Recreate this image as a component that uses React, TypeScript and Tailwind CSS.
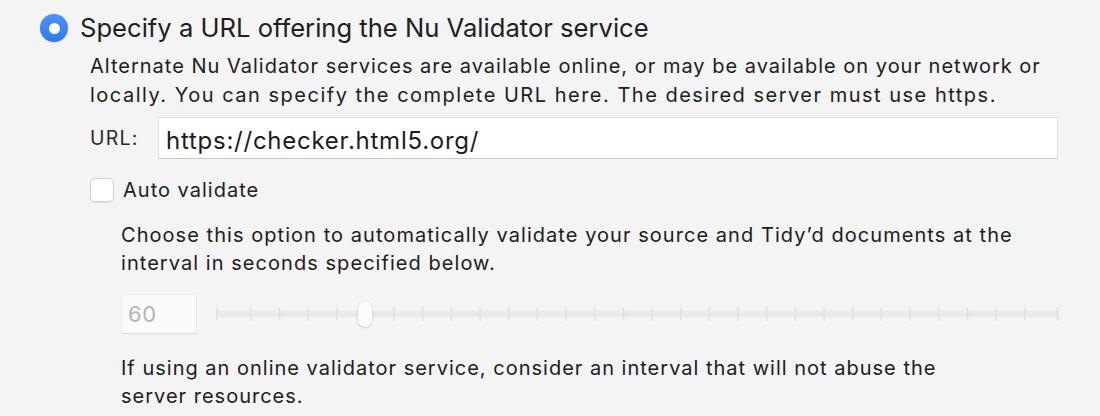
const font = { fontFamily: "Inter, 'Noto Sans', sans-serif" };

const TRACK_W = 842;
const TICKS = [0, ...Array.from({ length: 28 }, (_, i) => 34 + (i * 774) / 27), TRACK_W];

function RadioOn() {
  return (
    <span className="flex h-[28px] w-[28px] shrink-0 items-center justify-center rounded-full bg-gradient-to-b from-[#4c93fa] to-[#2f78f2] shadow-[0_0.5px_1px_rgba(0,0,0,0.25)]">
      <span className="h-[11px] w-[11px] rounded-full bg-white" />
    </span>
  );
}

function Slider() {
  return (
    <div className="relative h-[26px] w-[842px]">
      <svg width={TRACK_W + 2} height={26} className="absolute left-0 top-0">
        <rect x={0} y={10} width={TRACK_W} height={6} fill="#e9e9e9" />
        {TICKS.map((x, i) => (
          <rect key={i} x={Math.min(x, TRACK_W - 1)} y={6} width={1.5} height={14} fill="#e0e0e0" />
        ))}
      </svg>
      <div className="absolute left-[142px] top-0 h-[26px] w-[14px] rounded-full bg-[#fbfbfb] shadow-[0_0_0_0.5px_rgba(0,0,0,0.08),0_1px_2px_rgba(0,0,0,0.15)]" />
    </div>
  );
}

export default function App() {
  return (
    <div className="h-[416px] w-[1100px] overflow-hidden bg-[#f4f4f4] text-[#202020]" style={font}>
      <div className="flex items-center gap-3 pl-[40px] pt-[12px]">
        <RadioOn />
        <span className="whitespace-nowrap text-[25.6px] leading-[32px]">Specify a URL offering the Nu Validator service</span>
      </div>

      <div className="pl-[90px]">
        <p className="mt-[8px] whitespace-nowrap text-[20px] leading-[29px] tracking-[1px]">
          Alternate Nu Validator services are available online, or may be available on your network or
          <br />
          <span className="tracking-[1.5px]">locally. You can specify the complete URL here. The desired server must use https.</span>
        </p>

        <div className="mt-[7px] flex items-center">
          <span className="w-[68px] text-[19.5px] leading-[24px] tracking-[1.2px] text-[#2a2a2a]">URL:</span>
          <div className="h-[42px] w-[900px] whitespace-nowrap border border-[#dedede] border-b-[#c8c8c8] bg-white pl-[7px] pt-[8px] text-[24px] leading-[29px] tracking-[0.75px] text-[#1c1c1c]">
            https://checker.html5.org/
          </div>
        </div>

        <div className="mt-[19px] flex items-center gap-[9px]">
          <span className="h-[24px] w-[24px] rounded-[5px] border border-[#d2d2d2] bg-white shadow-[0_0.5px_1px_rgba(0,0,0,0.08)]" />
          <span className="text-[20px] leading-[24px] tracking-[1px]">Auto validate</span>
        </div>

        <div className="pl-[31px]">
          <p className="mt-[19px] whitespace-nowrap text-[20px] leading-[28px] tracking-[1.05px]">
            Choose this option to automatically validate your source and Tidy’d documents at the
            <br />
            interval in seconds specified below.
          </p>

          <div className="mt-[17px] flex items-center gap-[19px]">
            <div className="h-[40px] w-[76px] border border-[#ececec] border-b-[#dcdcdc] bg-[#fafafa] pl-[6px] pt-[5px] text-[22px] leading-[28px] tracking-[0.5px] text-[#b4b4b4]">
              60
            </div>
            <Slider />
          </div>

          <p className="mt-[20px] whitespace-nowrap text-[20px] leading-[28px] tracking-[1px]">
            If using an online validator service, consider an interval that will not abuse the
            <br />
            server resources.
          </p>
        </div>
      </div>
    </div>
  );
}
